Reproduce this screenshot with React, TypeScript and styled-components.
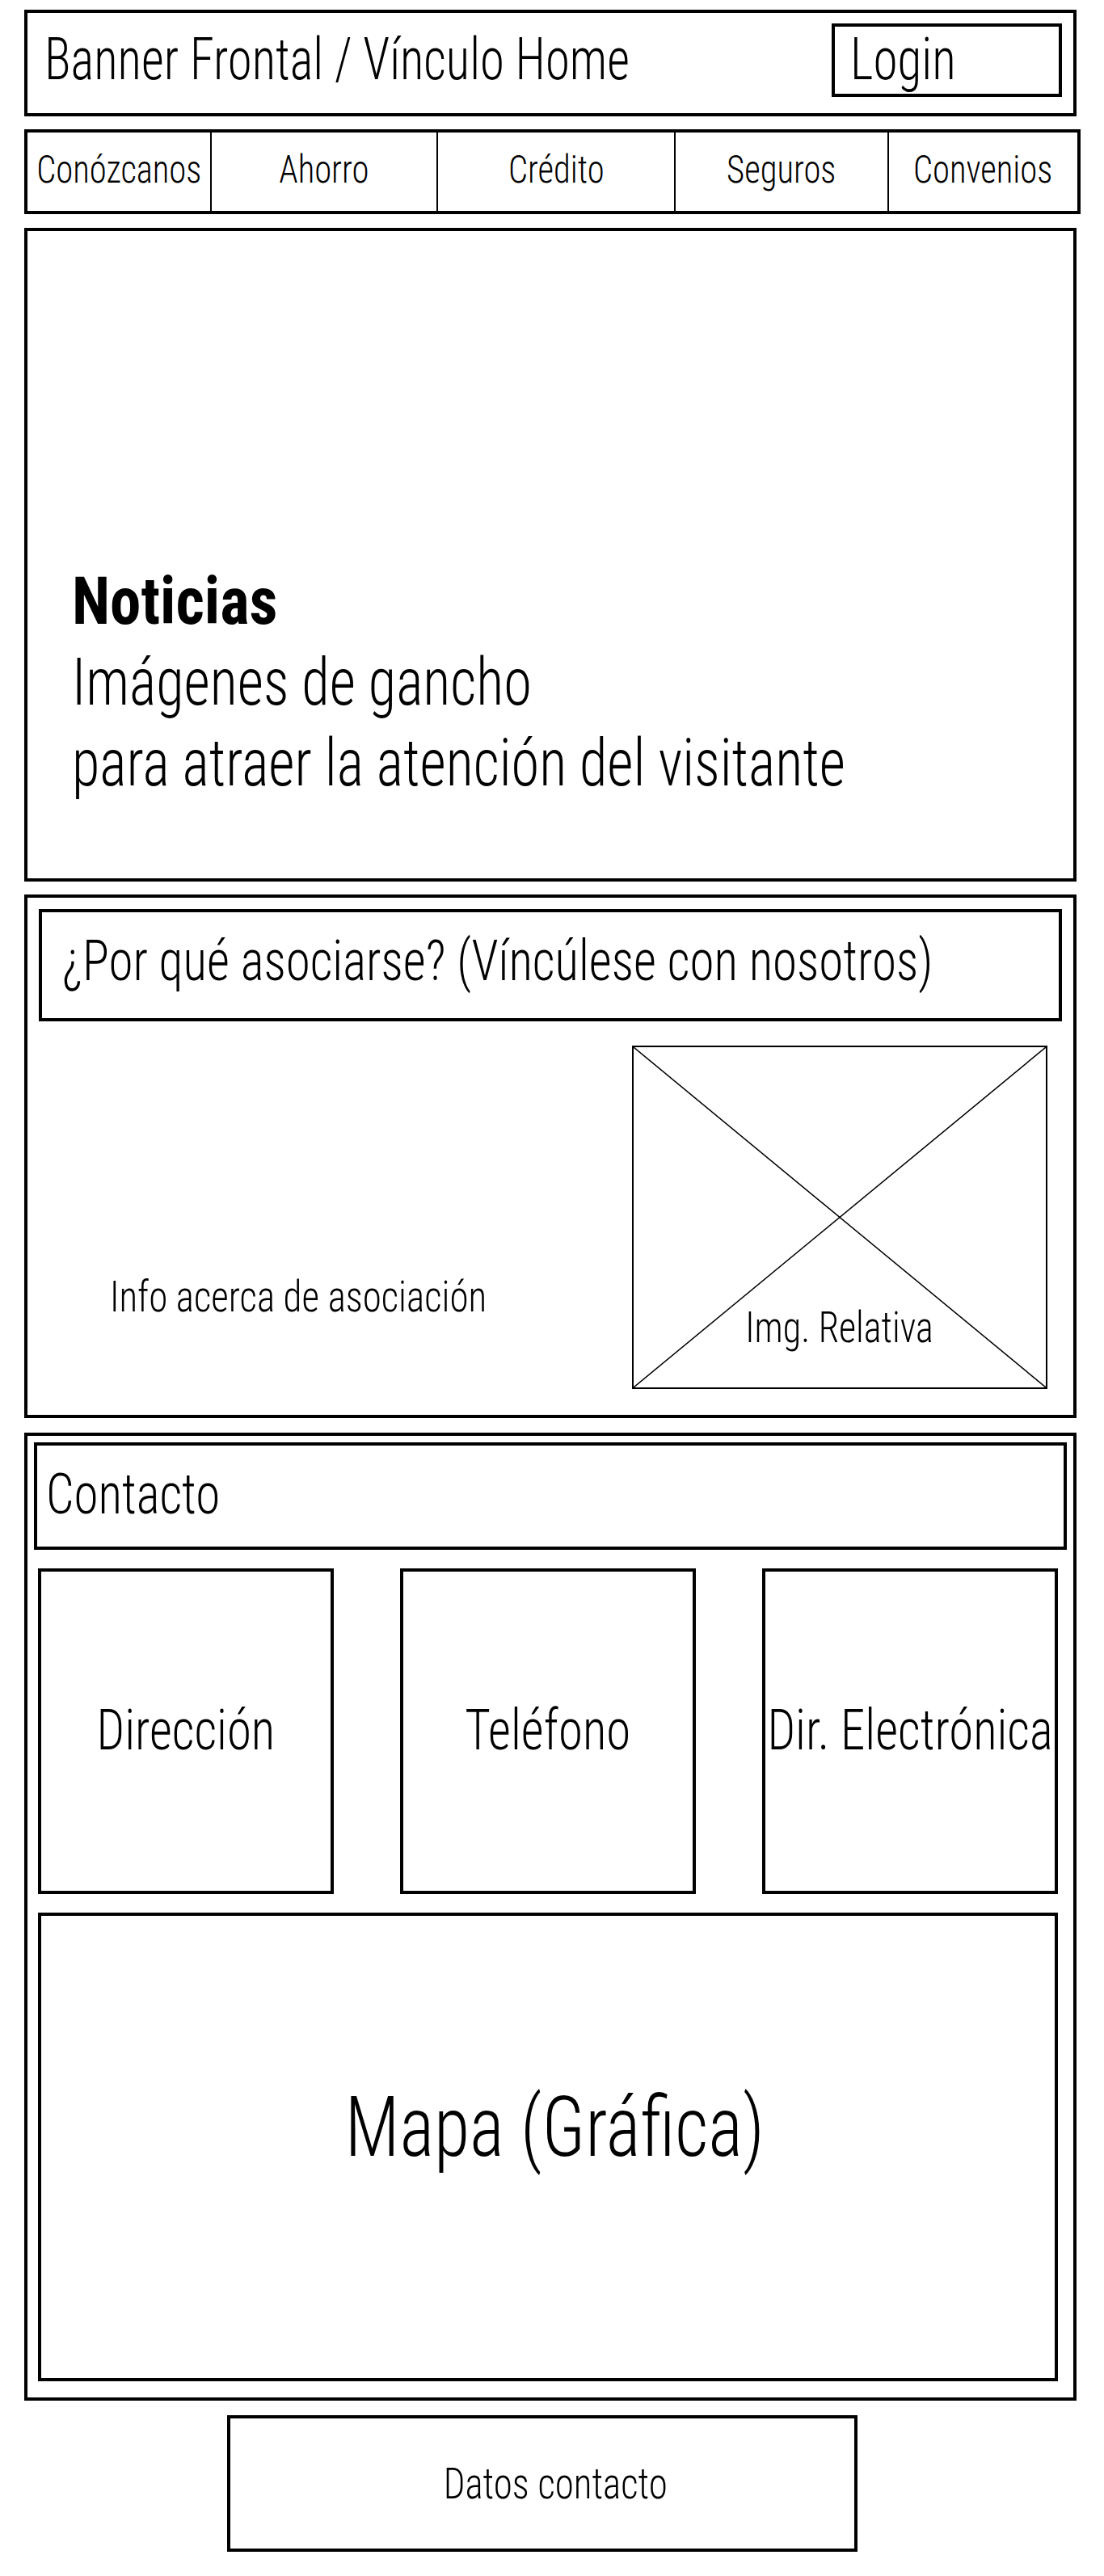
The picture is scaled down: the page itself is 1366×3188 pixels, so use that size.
import React from 'react'
import styled, { createGlobalStyle, css } from 'styled-components'

const FONT = `"Roboto Condensed", "Liberation Sans Narrow", "Roboto", "Liberation Sans", sans-serif`

// the mockup uses a light condensed grotesk, narrower than Roboto Condensed
const condensed = (origin: string, scale = 0.87) => css`
  display: inline-block;
  transform: scaleX(${scale});
  transform-origin: ${origin};
`

const GlobalStyle = createGlobalStyle`
  html, body {
    margin: 0;
    padding: 0;
    background: #fff;
  }
  body {
    font-family: ${FONT};
    font-weight: 300;
    color: #000;
  }
`

const Page = styled.div`
  width: 1366px;
  box-sizing: border-box;
  padding: 12px 0 30px 30px;
  display: flex;
  flex-direction: column;
  align-items: flex-start;
`

const Banner = styled.header`
  box-sizing: border-box;
  width: 1302px;
  height: 132px;
  border: 4px solid #000;
  display: flex;
  justify-content: space-between;
  align-items: flex-start;
`

const BannerTitle = styled.h1`
  margin: 22px 0 0 21px;
  font-size: 72px;
  line-height: 72px;
  font-weight: 300;
  white-space: nowrap;
  ${condensed('left center', 0.845)}
`

const LoginButton = styled.div`
  box-sizing: border-box;
  width: 285px;
  height: 91px;
  margin: 13px 14px 0 0;
  padding: 5px 0 0 19px;
  border: 4px solid #000;
  font-size: 72px;
  line-height: 72px;
`

const LoginLabel = styled.span`
  ${condensed('left center', 0.85)}
`

const NavBar = styled.nav`
  box-sizing: border-box;
  width: 1307px;
  height: 105px;
  margin-top: 16px;
  border: 4px solid #000;
  display: grid;
  grid-template-columns: 226px 280px 294px 264px 1fr;
`

const NavItem = styled.div`
  display: flex;
  justify-content: center;
  align-items: flex-start;
  padding-top: 21px;
  font-size: 49px;
  line-height: 49px;
  white-space: nowrap;

  & + & {
    border-left: 2px solid #000;
  }
`

const NavLabel = styled.span`
  ${condensed('center')}
`

const NewsPanel = styled.section`
  box-sizing: border-box;
  width: 1302px;
  height: 809px;
  margin-top: 17px;
  border: 4px solid #000;
  padding: 0 0 92px 55px;
  display: flex;
  flex-direction: column;
  justify-content: flex-end;
  align-items: flex-start;
`

const NewsLine = styled.div<{ $bold?: boolean }>`
  font-size: 81px;
  line-height: 100px;
  font-weight: ${({ $bold }) => ($bold ? 700 : 300)};
  white-space: nowrap;
  ${({ $bold }) => condensed('left center', $bold ? 0.95 : 0.87)}
`

const Section = styled.section<{ $height: number; $gap: number; $inset: number }>`
  box-sizing: border-box;
  width: 1302px;
  height: ${({ $height }) => $height}px;
  margin-top: ${({ $gap }) => $gap}px;
  border: 4px solid #000;
  padding: ${({ $inset }) => $inset}px;
  display: flex;
  flex-direction: column;
`

const SectionHeader = styled.div<{ $height: number; $padLeft: number }>`
  box-sizing: border-box;
  height: ${({ $height }) => $height}px;
  border: 4px solid #000;
  padding: 24px 0 0 ${({ $padLeft }) => $padLeft}px;
  font-size: 71px;
  line-height: 71px;
  white-space: nowrap;
`

const HeaderLabel = styled.span`
  ${condensed('left center', 0.86)}
`

const AboutRow = styled.div`
  display: flex;
  justify-content: space-between;
  margin-top: 30px;
  padding-right: 18px;
`

const AboutText = styled.p`
  margin: 284px 0 0 88px;
  font-size: 54px;
  line-height: 54px;
  white-space: nowrap;
  ${condensed('left center')}
`

const ImagePlaceholder = styled.div`
  position: relative;
  box-sizing: border-box;
  width: 514px;
  height: 425px;
  border: 2px solid #000;
  display: flex;
  flex-direction: column;
  justify-content: flex-end;
  align-items: center;
  padding-bottom: 47px;
`

const Cross = styled.svg`
  position: absolute;
  inset: 0;
  width: 100%;
  height: 100%;
`

const ImageLabel = styled.span`
  position: relative;
  font-size: 53px;
  line-height: 53px;
  white-space: nowrap;
  ${condensed('center')}
`

const ContactCards = styled.div`
  display: flex;
  justify-content: space-between;
  margin: 23px 11px 0 5px;
`

const ContactCard = styled.div`
  box-sizing: border-box;
  width: 366px;
  height: 403px;
  border: 4px solid #000;
  display: flex;
  justify-content: center;
  align-items: flex-start;
  padding-top: 161px;
  font-size: 70px;
  line-height: 70px;
  white-space: nowrap;
`

const CardLabel = styled.span`
  ${condensed('center')}
`

const MapPanel = styled.div`
  box-sizing: border-box;
  height: 580px;
  margin: 23px 11px 0 5px;
  border: 4px solid #000;
  display: flex;
  justify-content: center;
  align-items: flex-start;
  padding: 210px 0 0 16px;
  font-size: 104px;
  line-height: 104px;
  white-space: nowrap;
`

const MapLabel = styled.span`
  ${condensed('center')}
`

const FooterBox = styled.footer`
  box-sizing: border-box;
  width: 780px;
  height: 169px;
  margin: 18px 0 0 251px;
  border: 4px solid #000;
  display: flex;
  justify-content: center;
  align-items: center;
  padding-left: 32px;
  font-size: 54px;
  line-height: 54px;
  white-space: nowrap;
`

const FooterLabel = styled.span`
  ${condensed('center')}
`

const navItems = ['Conózcanos', 'Ahorro', 'Crédito', 'Seguros', 'Convenios']
const contactItems = ['Dirección', 'Teléfono', 'Dir. Electrónica']

export default function App() {
  return (
    <>
      <GlobalStyle />
      <Page>
        <Banner>
          <BannerTitle>Banner Frontal / Vínculo Home</BannerTitle>
          <LoginButton>
            <LoginLabel>Login</LoginLabel>
          </LoginButton>
        </Banner>

        <NavBar>
          {navItems.map((item) => (
            <NavItem key={item}>
              <NavLabel>{item}</NavLabel>
            </NavItem>
          ))}
        </NavBar>

        <NewsPanel>
          <NewsLine $bold>Noticias</NewsLine>
          <NewsLine>Imágenes de gancho</NewsLine>
          <NewsLine>para atraer la atención del visitante</NewsLine>
        </NewsPanel>

        <Section $height={648} $gap={16} $inset={14}>
          <SectionHeader $height={139} $padLeft={25}>
            <HeaderLabel>¿Por qué asociarse? (Víncúlese con nosotros)</HeaderLabel>
          </SectionHeader>
          <AboutRow>
            <AboutText>Info acerca de asociación</AboutText>
            <ImagePlaceholder>
              <Cross viewBox="0 0 100 100" preserveAspectRatio="none">
                <line x1="0" y1="0" x2="100" y2="100" stroke="#000" strokeWidth="1.5" vectorEffect="non-scaling-stroke" />
                <line x1="100" y1="0" x2="0" y2="100" stroke="#000" strokeWidth="1.5" vectorEffect="non-scaling-stroke" />
              </Cross>
              <ImageLabel>Img. Relativa</ImageLabel>
            </ImagePlaceholder>
          </AboutRow>
        </Section>

        <Section $height={1198} $gap={18} $inset={8}>
          <SectionHeader $height={133} $padLeft={11}>
            <HeaderLabel>Contacto</HeaderLabel>
          </SectionHeader>
          <ContactCards>
            {contactItems.map((item) => (
              <ContactCard key={item}>
                <CardLabel>{item}</CardLabel>
              </ContactCard>
            ))}
          </ContactCards>
          <MapPanel>
            <MapLabel>Mapa (Gráfica)</MapLabel>
          </MapPanel>
        </Section>

        <FooterBox>
          <FooterLabel>Datos contacto</FooterLabel>
        </FooterBox>
      </Page>
    </>
  )
}
